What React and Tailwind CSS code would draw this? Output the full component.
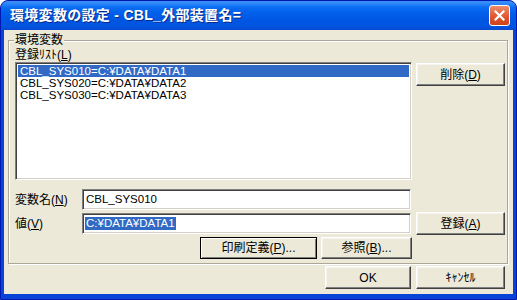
const U = ({ children }) => <span className="underline underline-offset-[1px]">{children}</span>;

const raised =
  "bg-[#ECE9D8] border border-t-white border-l-white border-r-[#404040] border-b-[#404040] shadow-[inset_-1px_-1px_0_#808080,inset_1px_1px_0_#F5F4EE]";
const sunken =
  "bg-white border border-t-[#808080] border-l-[#808080] border-r-white border-b-white shadow-[inset_1px_1px_0_#404040,inset_-1px_-1px_0_#D4D0C8]";

function Btn({ size, children }) {
  return (
    <div className={`${size} ${raised} flex items-center justify-center text-[12px] text-black leading-none`}>
      {children}
    </div>
  );
}

const items = ["CBL_SYS010=C:¥DATA¥DATA1", "CBL_SYS020=C:¥DATA¥DATA2", "CBL_SYS030=C:¥DATA¥DATA3"];

export default function App() {
  return (
    <div
      className="w-[517px] h-[300px] flex flex-col rounded-t-[8px] bg-[#0842D6] border border-[#0019B0] overflow-hidden text-black"
      style={{ fontFamily: '"Liberation Sans", "Noto Sans CJK JP", sans-serif' }}
    >
      {/* Title bar */}
      <div className="h-[29px] shrink-0 flex items-center pl-[9px] pr-[6px] bg-[linear-gradient(to_bottom,#3D8FF5_0%,#2C86FA_10%,#0A6CF2_22%,#0260EA_40%,#0057E3_65%,#0054E0_88%,#0A48D0_100%)]">
        <span className="text-white font-bold text-[14px] tracking-[0.3px] [text-shadow:1px_1px_0_#0A2A8A]">
          環境変数の設定 - CBL_外部装置名=
        </span>
        <div className="ml-auto w-[21px] h-[21px] rounded-[3px] border border-white bg-[linear-gradient(to_bottom,#EC8C6C,#E0532C_60%,#CC431C)] flex items-center justify-center">
          <svg width="11" height="11" viewBox="0 0 11 11">
            <path d="M1.5 1.5 L9.5 9.5 M9.5 1.5 L1.5 9.5" stroke="white" strokeWidth="2.2" strokeLinecap="square" />
          </svg>
        </div>
      </div>

      {/* Client area */}
      <div className="flex-1 mx-[3px] mb-[5px] bg-[#ECE9D8] pt-[10px] pl-[4px] pr-[5px] flex flex-col text-[12px]">
        {/* Group box */}
        <div className="relative w-[500px] border border-[#ACA899] shadow-[inset_1px_1px_0_#fff,1px_1px_0_#fff] pt-[7px] pl-[6px] pb-[4px]">
          <span className="absolute left-[5px] top-[-8px] px-[1px] bg-[#ECE9D8] leading-[14px]">環境変数</span>
          <div className="h-[14px] leading-[14px]">
            登録ﾘｽﾄ(<U>L</U>)
          </div>
          <div className="flex gap-[4px]">
            <div className={`w-[397px] h-[118px] ${sunken} p-[2px] text-[11.5px] leading-[12px]`}>
              {items.map((t, i) => (
                <div key={t} className={i === 0 ? "bg-[#316AC5] text-white pl-[2px] h-[12px]" : "pl-[2px] h-[12px]"}>
                  {t}
                </div>
              ))}
            </div>
            <div className="pt-[1px]">
              <Btn size="w-[89px] h-[23px]">
                削除(<U>D</U>)
              </Btn>
            </div>
          </div>

          <div className="flex items-center mt-[9px]">
            <div className="w-[67px]">
              変数名(<U>N</U>)
            </div>
            <div className={`w-[329px] h-[21px] ${sunken} flex items-center pl-[3px] text-[11.5px]`}>CBL_SYS010</div>
          </div>

          <div className="flex items-center mt-[2px]">
            <div className="w-[67px]">
              値(<U>V</U>)
            </div>
            <div className={`w-[329px] h-[21px] ${sunken} flex items-center pl-[2px] text-[11.5px]`}>
              <span className="bg-[#316AC5] text-white px-[1px] leading-[13px]">C:¥DATA¥DATA1</span>
            </div>
            <div className="ml-[5px]">
              <Btn size="w-[89px] h-[23px]">
                登録(<U>A</U>)
              </Btn>
            </div>
          </div>

          <div className="flex mt-[2px] pl-[185px] gap-[4px]">
            <div className="w-[117px] h-[22px] bg-[#ECE9D8] border border-black shadow-[inset_1px_1px_0_#fff,inset_-1px_-1px_0_#808080] flex items-center justify-center">
              印刷定義(<U>P</U>)...
            </div>
            <Btn size="w-[91px] h-[22px]">
              参照(<U>B</U>)...
            </Btn>
          </div>
        </div>

        {/* OK / Cancel */}
        <div className="flex justify-end gap-[5px] mt-[2px] pr-[3px]">
          <Btn size="w-[86px] h-[23px]">OK</Btn>
          <Btn size="w-[89px] h-[23px]">ｷｬﾝｾﾙ</Btn>
        </div>
      </div>
    </div>
  );
}
